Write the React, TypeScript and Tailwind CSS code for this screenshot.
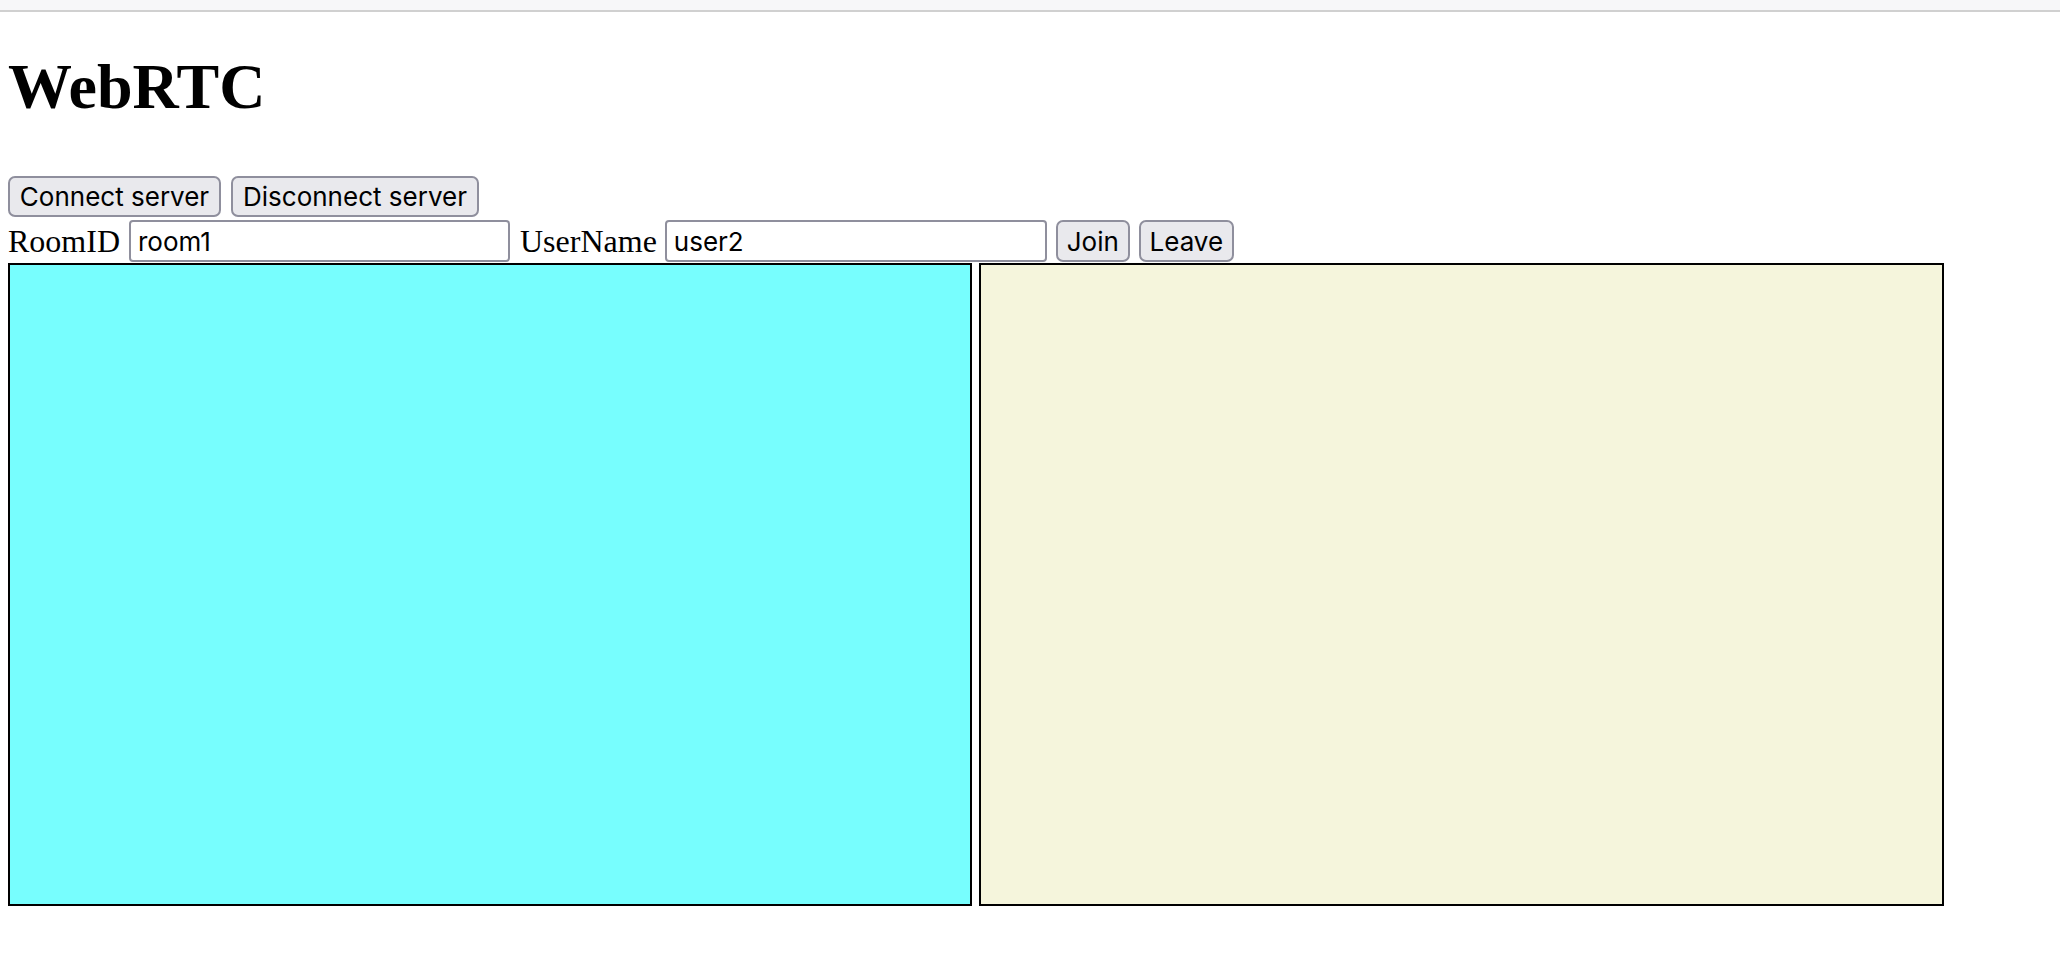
import React from "react";

const btn =
  "h-full shrink-0 rounded-[7px] border-2 border-[#8f8f9d] bg-[#e9e9ed] text-[26px] text-black flex items-center justify-center font-['Inter',sans-serif]";

const input =
  "h-full shrink-0 rounded-[4px] border-2 border-[#8f8f9d] bg-white pl-[7px] text-[26px] text-black outline-none font-['Inter',sans-serif]";

const label = "text-[32px] text-black font-['Liberation_Serif',serif] whitespace-nowrap";

export default function App() {
  return (
    <div className="min-h-[974px] w-full bg-white">
      <div className="h-[12px] border-b-2 border-[#d0d0d0] bg-[#f7f7f9]" />
      <div className="px-2">
        <h1 className="mt-[43px] mb-[57px] text-[64px] leading-[64px] font-bold text-black font-['Liberation_Serif',serif]">
          WebRTC
        </h1>

        <div className="flex h-[41px] gap-[10px]">
          <button className={`${btn} w-[213px]`}>Connect server</button>
          <button className={`${btn} w-[248px]`}>Disconnect server</button>
        </div>

        <div className="mt-[3px] flex h-[42px] items-center">
          <span className={label}>RoomID</span>
          <input className={`${input} ml-[9px] w-[381px]`} defaultValue="room1" />
          <span className={`${label} ml-[10px]`}>UserName</span>
          <input className={`${input} ml-[8px] w-[382px]`} defaultValue="user2" />
          <button className={`${btn} ml-[9px] w-[74px]`}>Join</button>
          <button className={`${btn} ml-[9px] w-[95px]`}>Leave</button>
        </div>

        <div className="mt-[1px] flex gap-[7px]">
          <div className="h-[643px] w-[964px] border-2 border-black bg-[#77fefe]" />
          <div className="h-[643px] w-[965px] border-2 border-black bg-[#f5f5dc]" />
        </div>
      </div>
    </div>
  );
}
